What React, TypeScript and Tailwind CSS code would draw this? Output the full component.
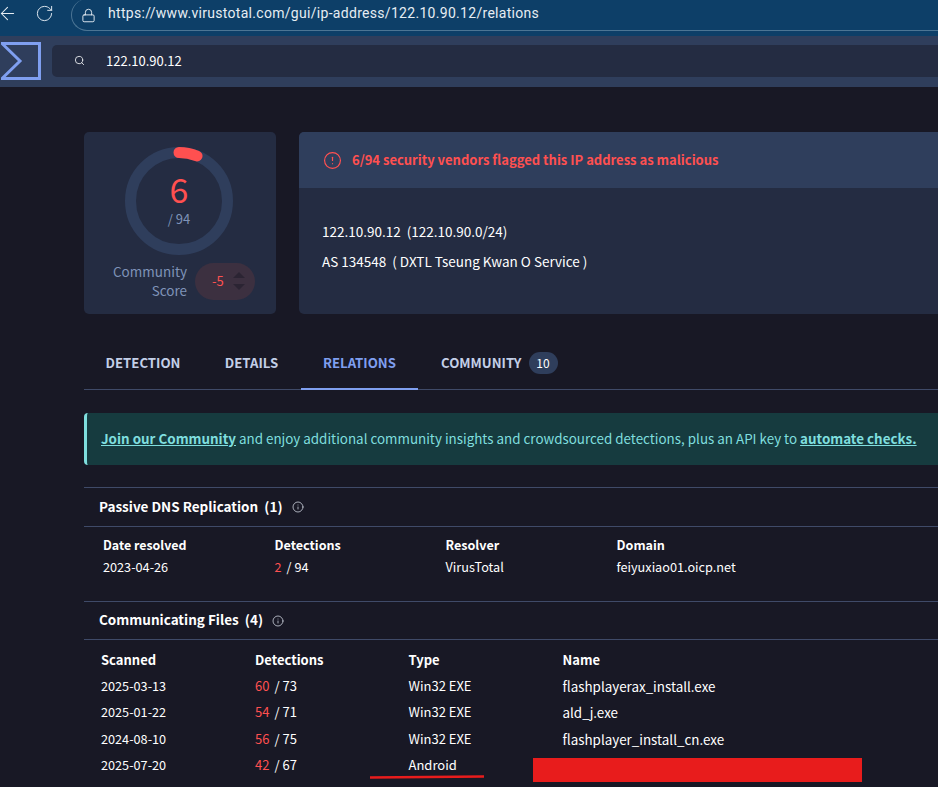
import { ArrowLeft, RotateCw, Lock, Search, Info, CircleAlert } from "lucide-react";

const FONT = "font-['Noto_Sans_CJK_JP','Noto_Sans',sans-serif]";

const passive = { date: "2023-04-26", hits: "2", total: "94", resolver: "VirusTotal", domain: "feiyuxiao01.oicp.net" };

const files = [
    { scanned: "2025-03-13", hits: "60", total: "73", type: "Win32 EXE", name: "flashplayerax_install.exe" },
    { scanned: "2025-01-22", hits: "54", total: "71", type: "Win32 EXE", name: "ald_j.exe" },
    { scanned: "2024-08-10", hits: "56", total: "75", type: "Win32 EXE", name: "flashplayer_install_cn.exe" },
    { scanned: "2025-07-20", hits: "42", total: "67", type: "Android", name: "" },
];

function BrowserBar() {
    return (
        <div className="h-[36px] bg-[#0d3f68] flex items-center text-[#e6edf3] shrink-0">
            <ArrowLeft size={21} strokeWidth={1.2} className="-ml-[3px] mt-[-9px]" />
            <RotateCw size={19} strokeWidth={1.2} className="ml-[17px] mt-[-9px]" />
            <div className="ml-[17px] h-[32px] mt-[-6px] flex-1 rounded-l-[16px] border border-[#4c7594] border-r-0 border-t-0 flex items-center pl-[9px] mr-[-20px]">
                <Lock size={15} strokeWidth={1.5} className="mt-[1px]" />
                <span className="ml-[12px] text-[14px] tracking-[0.3px] font-['Roboto',sans-serif] mt-[-3px]">
                    https://www.virustotal.com/gui/ip-address/122.10.90.12/relations
                </span>
            </div>
        </div>
    );
}

function SearchHeader() {
    return (
        <div className="h-[51px] bg-[#2f3e5c] flex items-center shrink-0">
            <svg width="40" height="38" viewBox="0 0 40 38" className="ml-[1px] mt-[-1px]">
                <path d="M1 1.5 H38.5 V36.5 H1 L19 19 Z" fill="none" stroke="#7f9ff0" strokeWidth="3" />
            </svg>
            <div className="ml-[11px] mt-[-2px] h-[32px] flex-1 bg-[#242c42] rounded-l-[5px] flex items-center pl-[22px]">
                <Search size={11} strokeWidth={2} className="text-[#e5e7eb]" />
                <span className="ml-[21px] text-[13px] text-white">122.10.90.12</span>
            </div>
        </div>
    );
}

function ScoreCard() {
    return (
        <div className="w-[192px] h-[182px] bg-[#242c42] rounded-[5px] flex flex-col items-center shrink-0">
            <div className="relative w-[108px] h-[108px] mt-[15px] ml-[-2px]">
                <svg width="108" height="108" viewBox="0 0 108 108">
                    <circle cx="54" cy="54" r="48.5" fill="none" stroke="#2f3e5c" strokeWidth="11" />
                    <path d="M54 5.5 A48.5 48.5 0 0 1 72 9" fill="none" stroke="#ff5050" strokeWidth="11" strokeLinecap="round" />
                </svg>
                <div className="absolute inset-0 flex flex-col items-center">
                    <span className="mt-[23px] text-[34px] leading-[38px] text-[#ff5050]">6</span>
                    <span className="text-[13px] leading-[18px] text-[#7f93b8] mt-[2px]">/ 94</span>
                </div>
            </div>
            <div className="flex items-center mt-[7px] ml-[8px]">
                <div className="text-right text-[13.5px] leading-[19px] text-[#7f93b8]">
                    Community
                    <br />
                    Score
                </div>
                <div className="ml-[8px] w-[60px] h-[37px] rounded-full bg-[#3c3040] flex items-center pl-[17px]">
                    <span className="text-[13px] text-[#ff5050]">-5</span>
                    <div className="ml-[9px] flex flex-col gap-[6px]">
                        <div className="w-0 h-0 border-x-[6px] border-x-transparent border-b-[6px] border-b-[#2b2433]" />
                        <div className="w-0 h-0 border-x-[6px] border-x-transparent border-t-[6px] border-t-[#2b2433]" />
                    </div>
                </div>
            </div>
        </div>
    );
}

function SummaryCard() {
    return (
        <div className="flex-1 h-[182px] bg-[#242c42] rounded-l-[5px] ml-[23px] overflow-hidden">
            <div className="h-[56px] bg-[#2f3e5c] flex items-center pl-[24px]">
                <CircleAlert size={19} strokeWidth={1.5} className="text-[#ff5050]" />
                <span className="ml-[10px] text-[13px] font-bold text-[#ff5050] mt-[-1px]">
                    6/94 security vendors flagged this IP address as malicious
                </span>
            </div>
            <div className="pl-[23px] pt-[28px] text-[13.5px] text-white">
                <div className="leading-[30px] whitespace-pre">122.10.90.12  (122.10.90.0/24)</div>
                <div className="leading-[30px] whitespace-pre">AS 134548  ( DXTL Tseung Kwan O Service )</div>
            </div>
        </div>
    );
}

function Tabs() {
    const base = "h-[50px] flex items-center justify-center text-[13.2px] font-bold";
    return (
        <div className="mt-[26px] h-[50px] flex border-b border-[#3f4a68] text-[#c3cfe8]">
            <div className={`${base} w-[118px] pb-[4px]`}>DETECTION</div>
            <div className={`${base} w-[99px] pb-[4px]`}>DETAILS</div>
            <div className={`${base} w-[117px] pb-[2px] text-[#7f9ff0] border-b-2 border-[#7f9ff0]`}>RELATIONS</div>
            <div className={`${base} ml-[23px] pb-[4px]`}>
                COMMUNITY
                <span className="ml-[7px] w-[29px] h-[22px] rounded-full bg-[#2f3e5c] text-white text-[12px] font-normal flex items-center justify-center">10</span>
            </div>
        </div>
    );
}

function Banner() {
    return (
        <div className="mt-[23px] h-[52px] pb-[2px] bg-[#163b3f] border-l-[3px] border-[#7fdede] rounded-l-[4px] flex items-center pl-[14px] text-[13.4px] text-[#7fdede] whitespace-nowrap">
            <a className="font-bold underline">Join our Community</a>
            <span>&nbsp;and enjoy additional community insights and crowdsourced detections, plus an API key to&nbsp;</span>
            <a className="font-bold underline">automate checks.</a>
        </div>
    );
}

function SectionTitle(props: { title: string; count: number; h: string; mt: string }) {
    return (
        <div className={`${props.h} ${props.mt} border-y border-[#3f4a68] flex items-center pl-[15px] text-[13.5px] font-bold text-white whitespace-pre`}>
            <span className="mt-[-2px]">{props.title}  ({props.count})</span>
            <Info size={12} strokeWidth={1.5} className="ml-[9px] text-[#d8dde8]" />
        </div>
    );
}

function Hits(props: { hits: string; total: string }) {
    return (
        <span>
            <span className="text-[#ff5050]">{props.hits}</span>
            <span className="ml-[5px]">/ {props.total}</span>
        </span>
    );
}

export default function App() {
    return (
        <div className={`${FONT} w-[938px] h-[787px] bg-[#181825] overflow-hidden flex flex-col`}>
            <BrowserBar />
            <SearchHeader />
            <div className="pl-[84px] pt-[45px] w-[938px]">
                <div className="flex">
                    <ScoreCard />
                    <SummaryCard />
                </div>
                <Tabs />
                <Banner />
                <SectionTitle title="Passive DNS Replication" count={1} h="h-[40px]" mt="mt-[22px]" />
                <div className="grid grid-cols-[171.5px_171px_171px_1fr] pl-[19px] pt-[7px] text-[12.7px] leading-[22px] text-white">
                    <div className="font-bold text-[12.4px]">Date resolved</div>
                    <div className="font-bold text-[12.6px]">Detections</div>
                    <div className="font-bold text-[12.6px]">Resolver</div>
                    <div className="font-bold text-[12.6px]">Domain</div>
                    <div>{passive.date}</div>
                    <div><Hits hits={passive.hits} total={passive.total} /></div>
                    <div>{passive.resolver}</div>
                    <div>{passive.domain}</div>
                </div>
                <SectionTitle title="Communicating Files" count={4} h="h-[39px]" mt="mt-[23px]" />
                <div className="grid grid-cols-[154px_153.5px_154px_1fr] grid-rows-[25.5px_repeat(4,26.5px)] pl-[17px] pt-[7px] text-[13px] leading-[26px] text-white">
                    <div className="font-bold">Scanned</div>
                    <div className="font-bold">Detections</div>
                    <div className="font-bold">Type</div>
                    <div className="font-bold">Name</div>
                    {files.map((file) => (
                        <div key={file.scanned} className="contents">
                            <div className="text-[12.7px]">{file.scanned}</div>
                            <div><Hits hits={file.hits} total={file.total} /></div>
                            <div className="relative">
                                {file.type}
                                {file.type === "Android" && (
                                    <svg width="116" height="6" viewBox="0 0 116 6" className="absolute left-[-40px] top-[22px]">
                                        <path d="M1 3.5 L115 2.5" stroke="#e81c1c" strokeWidth="2.5" />
                                    </svg>
                                )}
                            </div>
                            <div className="relative text-[13.4px]">
                                {file.name}
                                {file.name === "" && (
                                    <div className="absolute left-[-30px] top-[6px] w-[329px] h-[24px] bg-[#e81c1c]" />
                                )}
                            </div>
                        </div>
                    ))}
                </div>
            </div>
        </div>
    );
}
